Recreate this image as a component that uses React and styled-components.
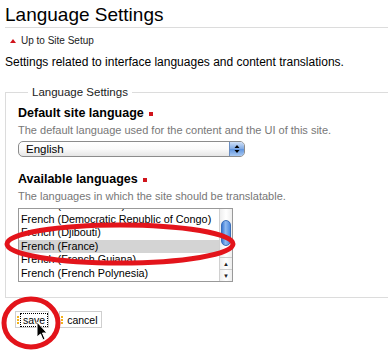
import React from "react";
import styled, { createGlobalStyle } from "styled-components";

const Global = createGlobalStyle`
  html, body { margin: 0; padding: 0; background: #fff; }
  body { font-family: "Liberation Sans", Arial, sans-serif; color: #000; }
`;

const Page = styled.div`
  position: relative;
  width: 388px;
  height: 353px;
  overflow: hidden;
  padding: 0 0 0 5px;
  box-sizing: border-box;
`;

const Title = styled.h1`
  margin: 0;
  padding: 5px 0 3px;
  font-size: 19px;
  font-weight: normal;
  line-height: 19px;
  border-bottom: 1px solid #dcdcdc;
`;

const UpLink = styled.div`
  display: flex;
  align-items: center;
  gap: 5px;
  margin: 7px 0 0 5px;
  font-size: 10px;
  line-height: 12px;
  color: #222;
`;

const Triangle = styled.span`
  width: 0;
  height: 0;
  border-left: 3px solid transparent;
  border-right: 3px solid transparent;
  border-bottom: 4px solid #d0141c;
`;

const Intro = styled.p`
  margin: 8px 0 0;
  font-size: 12px;
  line-height: 14px;
`;

const Fieldset = styled.fieldset`
  margin: 17px 0 0;
  width: 420px;
  box-sizing: border-box;
  border: 1px solid #dcdcdc;
  padding: 2px 12px 15px;
`;

const Legend = styled.legend`
  font-size: 11.5px;
  color: #222;
  padding: 0 4px;
  margin-left: 10px;
`;

const Label = styled.div`
  display: flex;
  align-items: center;
  gap: 5px;
  font-weight: bold;
  font-size: 12.5px;
  line-height: 15px;
  margin-top: ${(p) => p.$top}px;
`;

const Req = styled.span`
  width: 4px;
  height: 4px;
  background: #d0141c;
`;

const Help = styled.div`
  font-size: 11px;
  line-height: 13px;
  color: #777;
  margin-top: 3px;
`;

const Select = styled.div`
  margin-top: 4px;
  width: 227px;
  height: 16px;
  box-sizing: border-box;
  border: 1px solid #8c8c8c;
  border-radius: 5px;
  background: linear-gradient(#fff, #fafafa 50%, #e6e6e6);
  display: flex;
  align-items: center;
  overflow: hidden;
  font-size: 11.5px;
`;

const SelectText = styled.span`
  flex: 1;
  padding-left: 7px;
`;

const Stepper = styled.span`
  width: 14px;
  height: 100%;
  border-left: 1px solid #6a8ec2;
  background: linear-gradient(#cfe0f7, #7fa9e4 50%, #5e93de 51%, #a9c9f2);
  display: flex;
  align-items: center;
  justify-content: center;
`;

const ListBox = styled.div`
  margin-top: 5px;
  width: 215px;
  height: 74px;
  box-sizing: border-box;
  border: 1px solid #999;
  display: flex;
  overflow: hidden;
`;

const Options = styled.div`
  flex: 1;
  overflow: hidden;
`;

const OptionsInner = styled.div`
  margin-top: ${(p) => -p.$scroll}px;
`;

const Option = styled.div`
  font-size: 10.8px;
  line-height: 13.5px;
  height: 13.5px;
  padding-left: 2px;
  white-space: nowrap;
  background: ${(p) => (p.$selected ? "#d4d4d4" : "transparent")};
`;

const Scrollbar = styled.div`
  width: 12px;
  border-left: 1px solid #d0d0d0;
  background: linear-gradient(90deg, #eee, #fff 50%, #eee);
  display: flex;
  flex-direction: column;
`;

const Track = styled.div`
  flex: 1;
  padding: 3px 1px 0;
`;

const Thumb = styled.div`
  height: 26px;
  border-radius: 6px;
  background: linear-gradient(90deg, #3a78d4, #8fb9ef 45%, #4f8be0);
  border: 1px solid #3c6fb8;
  box-sizing: border-box;
  margin-top: 8px;
`;

const Arrow = styled.div`
  height: 11px;
  border-top: 1px solid #ccc;
  display: flex;
  align-items: center;
  justify-content: center;
  font-size: 6px;
  color: #222;
`;

const Buttons = styled.div`
  display: flex;
  gap: 10px;
  margin: 13px 0 0 10px;
`;

const Button = styled.div`
  display: flex;
  align-items: center;
  gap: 2px;
  height: 17px;
  box-sizing: border-box;
  border: 1px solid #cfcfcf;
  padding: 0 1px 0 1px;
  font-size: 10.5px;
`;

const Dots = styled.span`
  display: flex;
  flex-direction: column;
  gap: 1px;
  & > i {
    width: 2px;
    height: 2px;
    background: #f2b21c;
    display: block;
  }
`;

const ButtonText = styled.span`
  outline: ${(p) => (p.$focus ? "1px dotted #000" : "none")};
  padding: 0 2px;
  line-height: 12px;
`;

const Overlay = styled.svg`
  position: absolute;
  left: 0;
  top: 0;
  pointer-events: none;
`;

const options = [
  "French (Cote d'Ivoire)",
  "French (Democratic Republic of Congo)",
  "French (Djibouti)",
  "French (France)",
  "French (French Guiana)",
  "French (French Polynesia)",
];

export default function App() {
  return (
    <Page>
      <Global />
      <Title>Language Settings</Title>
      <UpLink>
        <Triangle />
        Up to Site Setup
      </UpLink>
      <Intro>Settings related to interface languages and content translations.</Intro>
      <Fieldset>
        <Legend>Language Settings</Legend>
        <Label $top={6}>
          Default site language <Req />
        </Label>
        <Help>The default language used for the content and the UI of this site.</Help>
        <Select>
          <SelectText>English</SelectText>
          <Stepper>
            <svg width="6" height="10" viewBox="0 0 6 10">
              <path d="M3 1 L5.5 4 H0.5Z M3 9 L5.5 6 H0.5Z" fill="#000" />
            </svg>
          </Stepper>
        </Select>
        <Label $top={15}>
          Available languages <Req />
        </Label>
        <Help>The languages in which the site should be translatable.</Help>
        <ListBox>
          <Options>
            <OptionsInner $scroll={10}>
              {options.map((o) => (
                <Option key={o} $selected={o === "French (France)"}>
                  {o}
                </Option>
              ))}
            </OptionsInner>
          </Options>
          <Scrollbar>
            <Track>
              <Thumb />
            </Track>
            <Arrow>▲</Arrow>
            <Arrow>▼</Arrow>
          </Scrollbar>
        </ListBox>
      </Fieldset>
      <Buttons>
        <Button>
          <Dots><i /><i /><i /></Dots>
          <ButtonText $focus>save</ButtonText>
        </Button>
        <Button>
          <Dots><i /><i /><i /></Dots>
          <ButtonText>cancel</ButtonText>
        </Button>
      </Buttons>
      <Overlay width="388" height="353" viewBox="0 0 388 353">
        <ellipse cx="120" cy="244" rx="113" ry="19" fill="none" stroke="#e3141b" strokeWidth="5" />
        <ellipse cx="31" cy="323" rx="27" ry="24" fill="none" stroke="#e3141b" strokeWidth="5" />
        <path
          d="M37 322 L37 337 L40.5 334 L43 340 L45 339 L42.5 333 L47 333 Z"
          fill="#000"
          stroke="#fff"
          strokeWidth="1"
        />
      </Overlay>
    </Page>
  );
}
